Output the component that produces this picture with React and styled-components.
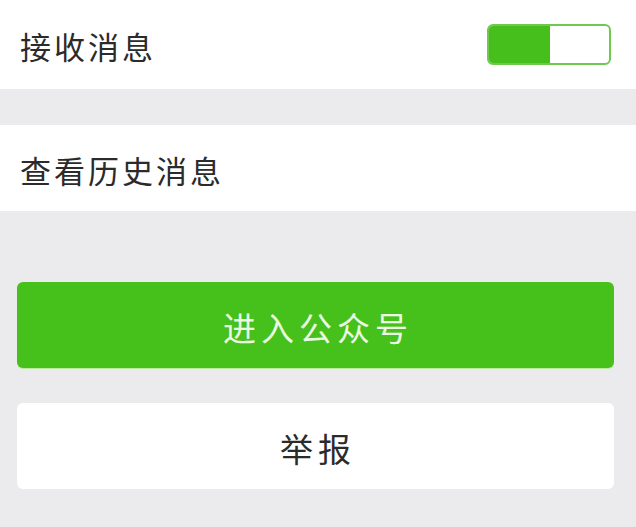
import React, { useState } from 'react';
import styled, { createGlobalStyle } from 'styled-components';

const GlobalStyle = createGlobalStyle`
  html, body {
    margin: 0;
    padding: 0;
    background: #ebebed;
  }
  body {
    font-family: "Noto Sans CJK SC", "Noto Sans", sans-serif;
    color: #2b2b2b;
  }
`;

const Page = styled.div`
  min-height: 527px;
  background: #ebebed;
`;

const Cell = styled.div`
  display: flex;
  align-items: center;
  justify-content: space-between;
  height: ${(p) => p.$height}px;
  margin-bottom: ${(p) => p.$gap || 0}px;
  padding: 0 25px 0 20px;
  background: #fff;
`;

const Label = styled.span`
  font-size: 31px;
  letter-spacing: 3px;
  line-height: 1;
  padding-top: 2px;
`;

const Toggle = styled.button`
  display: flex;
  width: 124px;
  height: 41px;
  padding: 0;
  border: 2px solid #6fc94f;
  border-radius: 6px;
  background: #fff;
  overflow: hidden;
  cursor: pointer;
`;

const ToggleFill = styled.span`
  width: 61px;
  height: 100%;
  background: ${(p) => (p.$on ? '#46bf1c' : '#fff')};
`;

const Actions = styled.div`
  display: flex;
  flex-direction: column;
  gap: 35px;
  padding: 71px 22px 0 17px;
`;

const ActionButton = styled.button`
  height: 86px;
  border: none;
  border-radius: 6px;
  background: ${(p) => (p.$primary ? '#46c01b' : '#fff')};
  color: ${(p) => (p.$primary ? '#eaf9e2' : '#2b2b2b')};
  box-shadow: ${(p) => (p.$primary ? '0 1px 0 #b9ec9f' : 'none')};
  font-family: "Noto Sans CJK SC", "Noto Sans", sans-serif;
  font-size: 33px;
  letter-spacing: 5px;
  padding: 4px 0 0 5px;
  cursor: pointer;
`;

export default function App() {
  const [on, setOn] = useState(true);

  return (
    <Page>
      <GlobalStyle />
      <Cell $height={89} $gap={36}>
        <Label>接收消息</Label>
        <Toggle onClick={() => setOn(!on)} aria-pressed={on}>
          <ToggleFill $on={on} />
        </Toggle>
      </Cell>
      <Cell $height={86}>
        <Label>查看历史消息</Label>
      </Cell>
      <Actions>
        <ActionButton $primary>进入公众号</ActionButton>
        <ActionButton>举报</ActionButton>
      </Actions>
    </Page>
  );
}
